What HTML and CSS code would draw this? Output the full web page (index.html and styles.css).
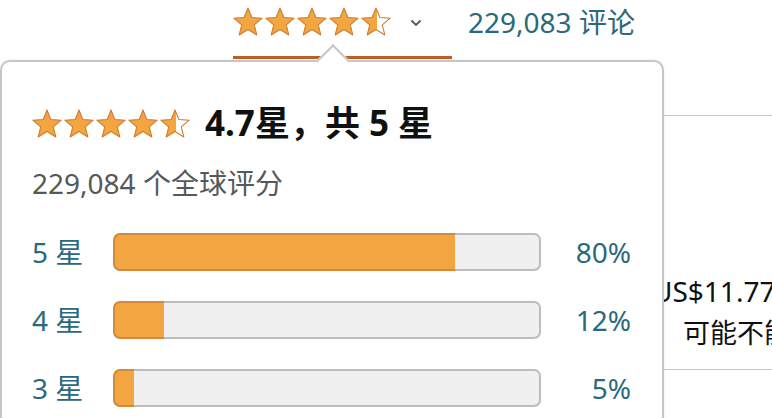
FILE: index.html
```html
<!DOCTYPE html>
<html lang="zh">
<head>
<meta charset="utf-8">
<title>评分</title>
<link rel="stylesheet" href="styles.css">
</head>
<body>
<svg class="defs" width="0" height="0" aria-hidden="true">
  <defs>
    <linearGradient id="half" x1="0" x2="1" y1="0" y2="0">
      <stop offset="0.55" stop-color="#f2a541"/>
      <stop offset="0.55" stop-color="#ffffff"/>
    </linearGradient>
    <path id="star" d="M12 0.9 L14.94 8.15 L22.8 8.65 L16.76 13.75 L18.7 21.4 L12 17.2 L5.3 21.4 L7.24 13.75 L1.2 8.65 L9.06 8.15 Z"/>
  </defs>
</svg>

<header class="header">
  <div class="trigger">
    <span class="stars">
      <svg class="star" viewBox="0.6 0.4 22.8 21.5"><use href="#star" class="full"/></svg>
      <svg class="star" viewBox="0.6 0.4 22.8 21.5"><use href="#star" class="full"/></svg>
      <svg class="star" viewBox="0.6 0.4 22.8 21.5"><use href="#star" class="full"/></svg>
      <svg class="star" viewBox="0.6 0.4 22.8 21.5"><use href="#star" class="full"/></svg>
      <svg class="star" viewBox="0.6 0.4 22.8 21.5"><use href="#star" class="halfstar"/></svg>
    </span>
    <svg class="chevron" viewBox="0 0 12 8"><path d="M1.5 1.5 L6 6 L10.5 1.5"/></svg>
  </div>
  <a class="count">229,083 评论</a>
</header>

<section class="side">
  <div class="price">US$11.77</div>
  <div class="note">可能不能送达您所在的地区</div>
</section>

<div class="popover">
  <div class="arrow"></div>
  <div class="title-row">
    <span class="stars">
      <svg class="star" viewBox="0.6 0.4 22.8 21.5"><use href="#star" class="full"/></svg>
      <svg class="star" viewBox="0.6 0.4 22.8 21.5"><use href="#star" class="full"/></svg>
      <svg class="star" viewBox="0.6 0.4 22.8 21.5"><use href="#star" class="full"/></svg>
      <svg class="star" viewBox="0.6 0.4 22.8 21.5"><use href="#star" class="full"/></svg>
      <svg class="star" viewBox="0.6 0.4 22.8 21.5"><use href="#star" class="halfstar"/></svg>
    </span>
    <h2 class="title">4.7星，共 5 星</h2>
  </div>
  <p class="total">229,084 个全球评分</p>
  <div class="histogram">
    <a class="label">5 星</a>
    <div class="bar"><div class="fill" style="width:80%"></div></div>
    <a class="pct">80%</a>
    <a class="label">4 星</a>
    <div class="bar"><div class="fill" style="width:12%"></div></div>
    <a class="pct">12%</a>
    <a class="label">3 星</a>
    <div class="bar"><div class="fill" style="width:5%"></div></div>
    <a class="pct">5%</a>
  </div>
</div>
</body>
</html>
```

FILE: styles.css
```css
html, body {
  margin: 0;
  padding: 0;
  background: #ffffff;
  overflow: hidden;
  height: 418px;
}
body {
  font-family: "Noto Sans", "Noto Sans CJK SC", sans-serif;
  color: #0f1111;
  position: relative;
}
.defs {
  position: absolute;
  width: 0;
  height: 0;
}

.header {
  display: flex;
  align-items: flex-start;
  padding-left: 233px;
  height: 59px;
}
.trigger {
  display: flex;
  align-items: flex-start;
  width: 219px;
  box-sizing: border-box;
  padding-top: 7px;
  height: 59px;
  border-bottom: 3px solid #bf5f26;
}
.stars {
  display: flex;
  gap: 2px;
}
.star {
  width: 30px;
  height: 29px;
  display: block;
}
.full {
  fill: #f2a541;
  stroke: #cf7a2c;
  stroke-width: 0.8;
  stroke-linejoin: round;
}
.halfstar {
  fill: url(#half);
  stroke: #cf7a2c;
  stroke-width: 0.8;
  stroke-linejoin: round;
}
.chevron {
  width: 12px;
  height: 8px;
  margin-left: 19px;
  margin-top: 12px;
  fill: none;
  stroke: #565959;
  stroke-width: 1.8;
}
.count {
  margin-left: 16px;
  font-size: 28px;
  line-height: 44px;
  color: #2a6a7b;
  white-space: nowrap;
}

.side {
  margin-left: 630px;
  margin-top: 56px;
  border-top: 1px solid #c8c8c8;
  border-bottom: 1px solid #c8c8c8;
  padding: 159px 0 19px 22px;
  white-space: nowrap;
}
.price {
  font-size: 28px;
  line-height: 32px;
}
.note {
  margin-top: 9px;
  padding-left: 31px;
  font-size: 27px;
  line-height: 34px;
}

.popover {
  position: absolute;
  left: 0;
  top: 60px;
  width: 664px;
  height: 420px;
  box-sizing: border-box;
  background: #ffffff;
  border: 2px solid #c6c6c6;
  border-radius: 10px;
  box-shadow: 0 0 3px rgba(0, 0, 0, 0.08);
  padding: 41px 31px 0 30px;
}
.arrow {
  position: absolute;
  left: 319px;
  top: -13px;
  width: 22px;
  height: 22px;
  background: #ffffff;
  border-top: 2px solid #c6c6c6;
  border-left: 2px solid #c6c6c6;
  transform: rotate(45deg);
}
.title-row {
  display: flex;
  align-items: center;
  gap: 15px;
  height: 40px;
}
.title {
  margin: 0;
  font-size: 35px;
  line-height: 40px;
  font-weight: 700;
  color: #0f1111;
  white-space: nowrap;
}
.total {
  margin: 22px 0 0 0;
  font-size: 28px;
  line-height: 36px;
  color: #565959;
}
.histogram {
  margin-top: 32px;
  display: grid;
  grid-template-columns: 81px 428px 1fr;
  grid-auto-rows: 38px;
  row-gap: 30px;
  align-items: center;
}
.label, .pct {
  font-size: 28px;
  line-height: 38px;
  color: #2a6a7b;
  white-space: nowrap;
}
.pct {
  text-align: right;
}
.bar {
  height: 38px;
  background: #f0f0f0;
  box-shadow: inset 0 0 0 2px #bdbdbd;
  border-radius: 7px;
  overflow: hidden;
}
.fill {
  height: 38px;
  box-sizing: border-box;
  background: #f2a541;
  border: 2px solid #d4883a;
  border-right: none;
  border-radius: 7px 0 0 7px;
}
```
